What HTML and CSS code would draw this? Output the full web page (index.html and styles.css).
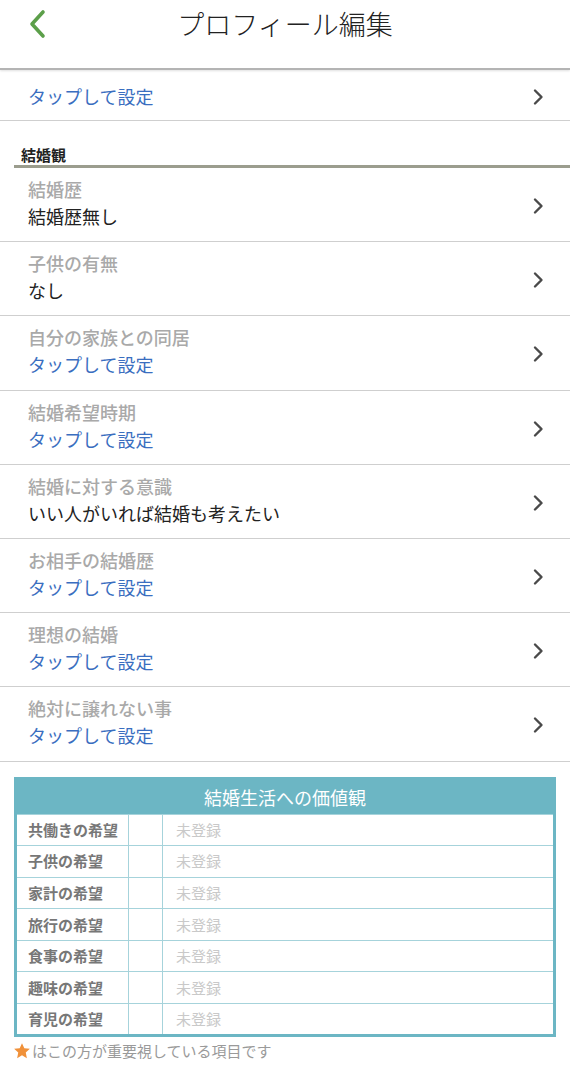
FILE: index.html
```html
<!DOCTYPE html>
<html lang="ja">
<head>
<meta charset="utf-8">
<title>プロフィール編集</title>
<link rel="stylesheet" href="styles.css">
</head>
<body>
<header class="header">
  <span class="back">
    <svg width="20" height="30" viewBox="0 0 20 30"><path d="M15 3 L4 15 L15 27" fill="none" stroke="#5c9f4a" stroke-width="3.6" stroke-linecap="round" stroke-linejoin="round"/></svg>
  </span>
  <h1 class="title">プロフィール編集</h1>
</header>

<div class="row row-single">
  <div class="row-text"><div class="value link">タップして設定</div></div>
  <svg class="chev" width="12" height="18" viewBox="0 0 12 18"><path d="M3 2.5 L9.5 9 L3 15.5" fill="none" stroke="#4a4a4a" stroke-width="2.4" stroke-linecap="round" stroke-linejoin="round"/></svg>
</div>

<h2 class="section">結婚観</h2>

<div class="list">
  <div class="row">
    <div class="row-text"><div class="label">結婚歴</div><div class="value">結婚歴無し</div></div>
    <svg class="chev" width="12" height="18" viewBox="0 0 12 18"><path d="M3 2.5 L9.5 9 L3 15.5" fill="none" stroke="#4a4a4a" stroke-width="2.4" stroke-linecap="round" stroke-linejoin="round"/></svg>
  </div>
  <div class="row">
    <div class="row-text"><div class="label">子供の有無</div><div class="value">なし</div></div>
    <svg class="chev" width="12" height="18" viewBox="0 0 12 18"><path d="M3 2.5 L9.5 9 L3 15.5" fill="none" stroke="#4a4a4a" stroke-width="2.4" stroke-linecap="round" stroke-linejoin="round"/></svg>
  </div>
  <div class="row">
    <div class="row-text"><div class="label">自分の家族との同居</div><div class="value link">タップして設定</div></div>
    <svg class="chev" width="12" height="18" viewBox="0 0 12 18"><path d="M3 2.5 L9.5 9 L3 15.5" fill="none" stroke="#4a4a4a" stroke-width="2.4" stroke-linecap="round" stroke-linejoin="round"/></svg>
  </div>
  <div class="row">
    <div class="row-text"><div class="label">結婚希望時期</div><div class="value link">タップして設定</div></div>
    <svg class="chev" width="12" height="18" viewBox="0 0 12 18"><path d="M3 2.5 L9.5 9 L3 15.5" fill="none" stroke="#4a4a4a" stroke-width="2.4" stroke-linecap="round" stroke-linejoin="round"/></svg>
  </div>
  <div class="row">
    <div class="row-text"><div class="label">結婚に対する意識</div><div class="value">いい人がいれば結婚も考えたい</div></div>
    <svg class="chev" width="12" height="18" viewBox="0 0 12 18"><path d="M3 2.5 L9.5 9 L3 15.5" fill="none" stroke="#4a4a4a" stroke-width="2.4" stroke-linecap="round" stroke-linejoin="round"/></svg>
  </div>
  <div class="row">
    <div class="row-text"><div class="label">お相手の結婚歴</div><div class="value link">タップして設定</div></div>
    <svg class="chev" width="12" height="18" viewBox="0 0 12 18"><path d="M3 2.5 L9.5 9 L3 15.5" fill="none" stroke="#4a4a4a" stroke-width="2.4" stroke-linecap="round" stroke-linejoin="round"/></svg>
  </div>
  <div class="row">
    <div class="row-text"><div class="label">理想の結婚</div><div class="value link">タップして設定</div></div>
    <svg class="chev" width="12" height="18" viewBox="0 0 12 18"><path d="M3 2.5 L9.5 9 L3 15.5" fill="none" stroke="#4a4a4a" stroke-width="2.4" stroke-linecap="round" stroke-linejoin="round"/></svg>
  </div>
  <div class="row">
    <div class="row-text"><div class="label">絶対に譲れない事</div><div class="value link">タップして設定</div></div>
    <svg class="chev" width="12" height="18" viewBox="0 0 12 18"><path d="M3 2.5 L9.5 9 L3 15.5" fill="none" stroke="#4a4a4a" stroke-width="2.4" stroke-linecap="round" stroke-linejoin="round"/></svg>
  </div>
</div>

<table class="values">
  <thead>
    <tr><th colspan="3" class="values-title">結婚生活への価値観</th></tr>
  </thead>
  <tbody>
    <tr><td class="c1">共働きの希望</td><td class="c2"></td><td class="c3">未登録</td></tr>
    <tr><td class="c1">子供の希望</td><td class="c2"></td><td class="c3">未登録</td></tr>
    <tr><td class="c1">家計の希望</td><td class="c2"></td><td class="c3">未登録</td></tr>
    <tr><td class="c1">旅行の希望</td><td class="c2"></td><td class="c3">未登録</td></tr>
    <tr><td class="c1">食事の希望</td><td class="c2"></td><td class="c3">未登録</td></tr>
    <tr><td class="c1">趣味の希望</td><td class="c2"></td><td class="c3">未登録</td></tr>
    <tr><td class="c1">育児の希望</td><td class="c2"></td><td class="c3">未登録</td></tr>
  </tbody>
</table>

<p class="note">
  <svg class="star" width="18" height="18" viewBox="0 0 24 24"><path d="M12 1.5 L15.1 8.3 L22.5 9.1 L17 14.1 L18.5 21.5 L12 17.8 L5.5 21.5 L7 14.1 L1.5 9.1 L8.9 8.3 Z" fill="#f0913a"/></svg><span>はこの方が重要視している項目です</span>
</p>
</body>
</html>
```

FILE: styles.css
```css
* { box-sizing: border-box; }
html, body { margin: 0; padding: 0; background: #fff; }
body {
  font-family: "Noto Sans CJK JP", "Noto Sans", sans-serif;
  color: #222;
  width: 570px;
}

.header {
  height: 70px;
  border-bottom: 2px solid #b4b4b4;
  box-shadow: 0 1px 2px rgba(0, 0, 0, 0.12);
  display: flex;
  justify-content: center;
  position: relative;
}
.back {
  position: absolute;
  left: 28px;
  top: 9px;
  display: block;
}
.back svg { display: block; }
.title {
  margin: 0;
  font-size: 27px;
  font-weight: 300;
  line-height: 48px;
  color: #222;
  letter-spacing: 0;
}

.row {
  display: flex;
  align-items: center;
  justify-content: space-between;
  padding: 8px 28px 11.2px 28px;
  border-bottom: 1px solid #cfcfcf;
}
.row-single { padding-top: 12.5px; padding-bottom: 10.5px; }
.row-text { min-width: 0; }
.label {
  font-size: 18px;
  line-height: 27px;
  color: #a9a9a9;
  font-weight: 500;
}
.value {
  font-size: 18px;
  line-height: 27px;
  color: #222;
}
.value.link { color: #3a6ec0; }
.chev { display: block; margin-top: 6px; margin-right: -2px; flex: none; }
.row-single .chev { margin-top: 2px; }

.section {
  margin: 24px 0 0 14px;
  padding: 0 0 0 7px;
  font-size: 15px;
  line-height: 20px;
  font-weight: 700;
  color: #222;
  border-bottom: 3px solid #9b9d8e;
  height: 23px;
}

.values {
  margin: 15px 0 0 14px;
  width: 542px;
  border-collapse: collapse;
  border: 3px solid #6cb6c4;
}
.values-title {
  background: #6cb6c4;
  color: #fff;
  font-size: 18px;
  font-weight: 400;
  height: 34px;
  line-height: 34px;
  padding: 0;
  text-align: center;
}
.values td {
  height: 31.6px;
  border: 1.5px solid #a6d3db;
  font-size: 15px;
  line-height: 20px;
  padding: 0;
}
.values tr:last-child td { border-bottom: none; }
.values td:first-child { border-left: none; }
.values td:last-child { border-right: none; }
.c1 {
  width: 113px;
  padding-left: 11px !important;
  font-weight: 700;
  color: #777;
}
.c2 { width: 34px; }
.c3 {
  padding-left: 13px !important;
  color: #c9c9c9;
}

.note {
  margin: 4px 0 0 13px;
  display: flex;
  align-items: center;
  font-size: 15px;
  line-height: 20px;
  color: #9a9a9a;
}
.star { display: block; margin-right: 1px; }
```
